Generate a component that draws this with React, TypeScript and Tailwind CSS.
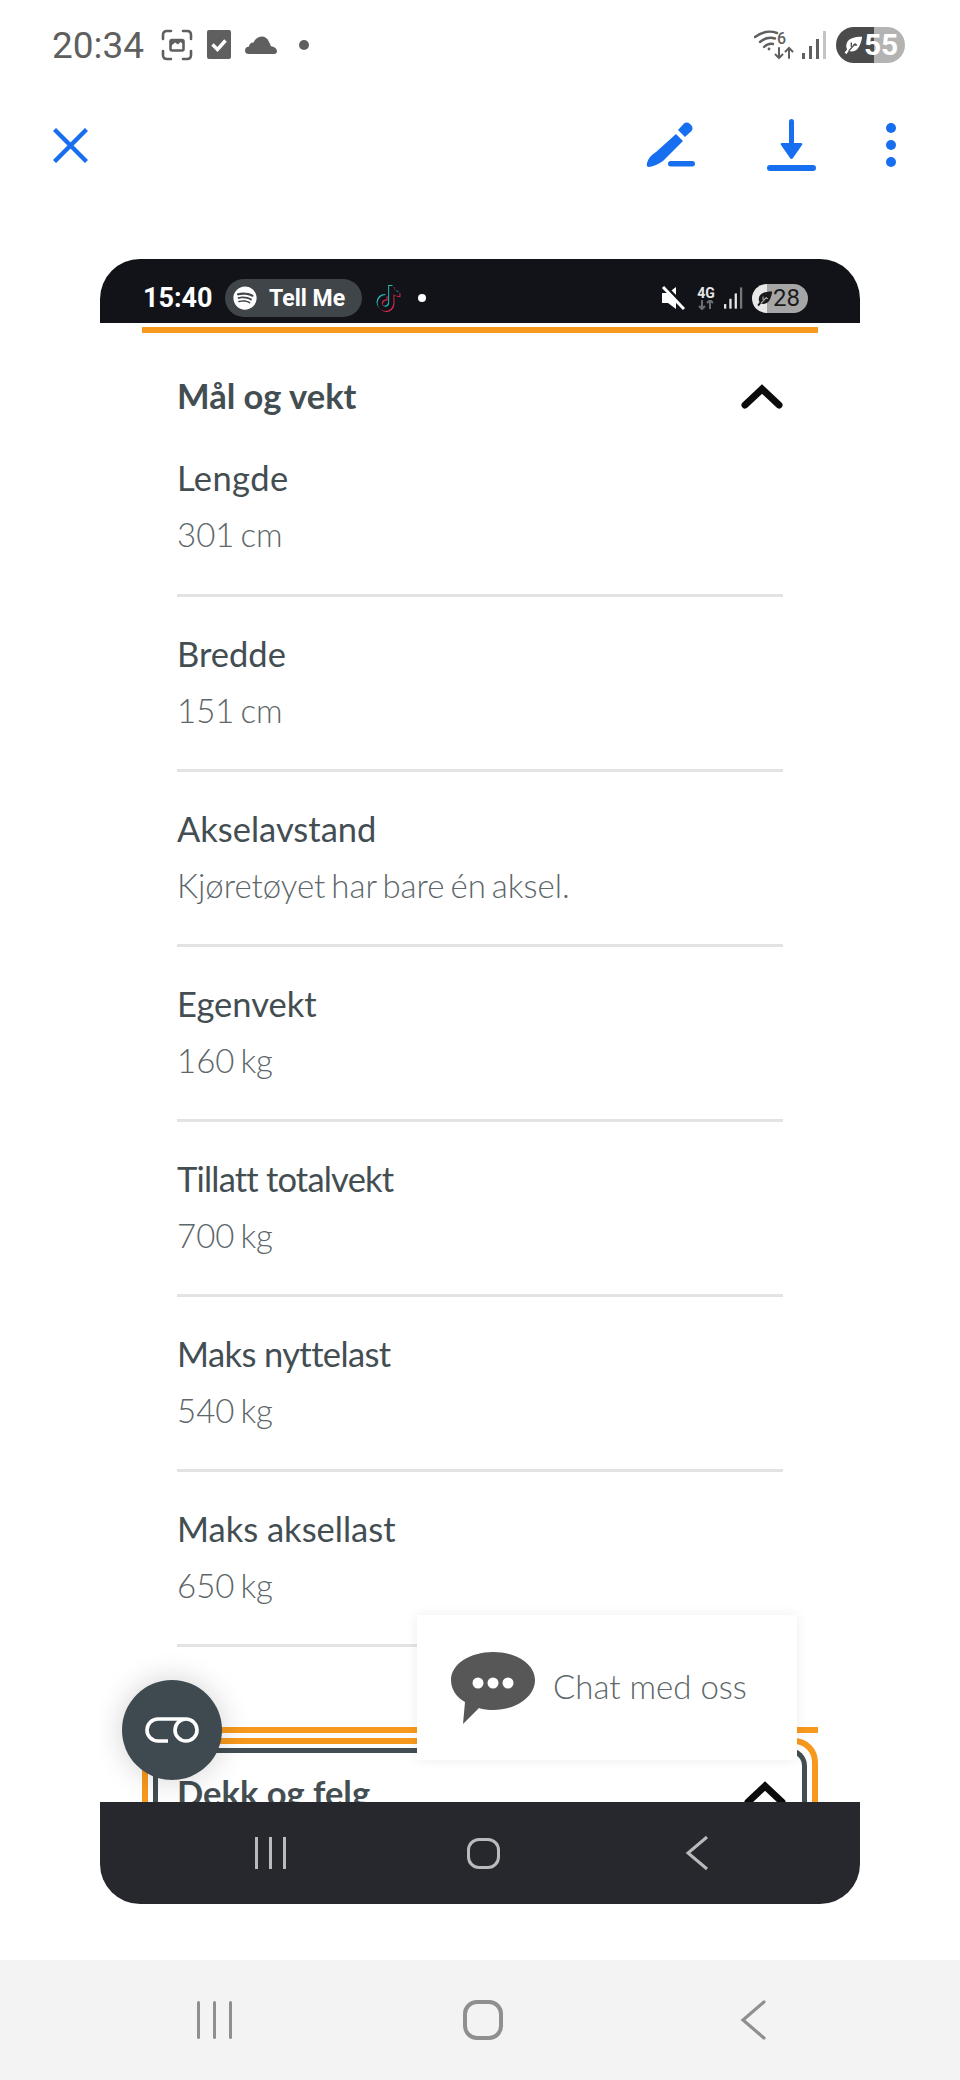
import React from "react";
import { FaSpotify, FaTiktok } from "react-icons/fa";

const rows = [
  { label: "Lengde", value: "301 cm", fit: "tracking-[0.4px]" },
  { label: "Bredde", value: "151 cm", fit: "" },
  { label: "Akselavstand", value: "Kjøretøyet har bare én aksel.", fit: "" },
  { label: "Egenvekt", value: "160 kg", fit: "" },
  { label: "Tillatt totalvekt", value: "700 kg", fit: "tracking-[-0.8px]" },
  { label: "Maks nyttelast", value: "540 kg", fit: "tracking-[-0.6px]" },
  { label: "Maks aksellast", value: "650 kg", fit: "" },
];

function Chevron() {
  return (
    <svg width="42" height="26" viewBox="0 0 42 26" fill="none" stroke="#0b0b0b" strokeWidth="7" strokeLinecap="round" strokeLinejoin="miter">
      <path d="M4 22 L21 6 L38 22" />
    </svg>
  );
}

function Signal({ color, dim, w = 25, h = 28 }: { color: string; dim: string; w?: number; h?: number }) {
  return (
    <svg width={w} height={h} viewBox="0 0 25 28">
      <rect x="0" y="22" width="3" height="6" fill={color} />
      <rect x="7" y="15" width="3" height="13" fill={color} />
      <rect x="14" y="8" width="3" height="20" fill={color} />
      <rect x="21" y="0" width="3" height="28" fill={dim} />
    </svg>
  );
}

function Leaf({ color, stem, size }: { color: string; stem: string; size: number }) {
  return (
    <svg width={size} height={size} viewBox="0 0 24 24" fill={color}>
      <path d="M23 2 C13 2 5 4 4 12 C3.7 14 4 15.5 5 17 L2 21 L4 23 L7 19 C9 20 12 20 15 18.5 C19 16.5 22 9 23 2 Z" />
      <path d="M7 19 L15 10 M10 14 L10 9 M12 12 L17 12" stroke={stem} strokeWidth="1.6" fill="none" />
    </svg>
  );
}

export default function App() {
  return (
    <div className="w-[960px] h-[2080px] bg-white flex flex-col overflow-hidden font-['Lato','Noto_Sans',sans-serif]">
      {/* phone status bar */}
      <div className="h-[90px] pl-[52px] pr-[55px] flex items-center justify-between text-[#5f5f5f]">
        <div className="flex items-center">
          <span className="text-[37px] leading-none font-normal font-['Roboto',sans-serif] w-[109px]">20:34</span>
          <svg width="32" height="32" viewBox="0 0 32 32" fill="none" stroke="#5f5f5f" strokeWidth="2.6" strokeLinecap="round">
            <path d="M2 10 V6 Q2 2 6 2 H10 M22 2 H26 Q30 2 30 6 V10 M30 22 V26 Q30 30 26 30 H22 M10 30 H6 Q2 30 2 26 V22" />
            <rect x="9.5" y="11" width="13" height="10.5" rx="1.5" />
            <path d="M10 17 L14 13.5 L17 15.5 L19.5 13 L22 15 V11 H10 Z" fill="#5f5f5f" stroke="none" />
          </svg>
          <svg className="ml-[14px]" width="24" height="30" viewBox="0 0 24 30">
            <rect width="24" height="29" rx="2" fill="#5f5f5f" />
            <path d="M5.5 14.5 L10.5 19.5 L18.5 10.5" fill="none" stroke="#fff" strokeWidth="3.4" />
          </svg>
          <svg className="ml-[14px]" width="32" height="18" viewBox="0 0 32 18" fill="#5f5f5f">
            <path d="M4 18 Q0 18 0 14.5 Q0 11 4 10.5 Q4.5 6.5 8.5 6.5 Q11 1 16.5 0.5 Q22 0.5 24 6 Q26 9 25.5 10 Q31.5 11 32 15 Q32 18 29 18 Z" />
          </svg>
          <span className="ml-[22px] w-[10px] h-[10px] rounded-full bg-[#5f5f5f]" />
        </div>
        <div className="flex items-center">
          <svg width="40" height="30" viewBox="0 0 40 30" fill="none" stroke="#5f5f5f" strokeWidth="2.4" strokeLinecap="round">
            <path d="M1 7 Q12 -1 23 3" />
            <path d="M6 12 Q13 6 21 8.5" />
            <path d="M10 17 Q14 13 19 14" />
            <circle cx="15" cy="19" r="1.4" fill="#5f5f5f" stroke="none" />
            <path d="M25 18 V28 M21.5 24.5 L25 28 L28.5 24.5" strokeWidth="2" />
            <path d="M35 28 V18 M31.5 21.5 L35 18 L38.5 21.5" strokeWidth="2" />
            <text x="23" y="14" fontSize="16" fontWeight="500" fill="#5f5f5f" stroke="none" fontFamily="Roboto">6</text>
          </svg>
          <span className="ml-[8px] flex"><Signal color="#5f5f5f" dim="#c4c4c4" /></span>
          <div className="ml-[9px] w-[69px] h-[36px] rounded-full overflow-hidden flex relative">
            <div className="w-[38px] bg-[#4b4b4b]" />
            <div className="flex-1 bg-[#b3b3b3]" />
            <div className="absolute inset-0 flex items-center pl-[7px]">
              <Leaf color="#fff" stem="#4b4b4b" size={20} />
              <span className="ml-[1px] text-white text-[30px] leading-none font-bold font-['Roboto',sans-serif] tracking-[-0.3px]">55</span>
            </div>
          </div>
        </div>
      </div>

      {/* toolbar */}
      <div className="mt-[17px] h-[76px] pl-[53px] pr-[64px] flex items-center justify-between">
        <svg width="35" height="35" viewBox="0 0 35 35" stroke="#176ff0" strokeWidth="4.4" fill="none">
          <path d="M1.5 1.5 L33.5 33.5 M33.5 1.5 L1.5 33.5" />
        </svg>
        <div className="flex items-center">
          <svg width="50" height="46" viewBox="0 0 50 46" fill="#176ff0">
            <path d="M30 12 L37 19 L17 39 Q10 44 3 45 Q0 45 1 41 Q3 34 10 30 Z" />
            <path d="M32 8 L38 1.5 Q41 -0.5 44 2 L45.5 3.5 Q47.5 6.5 45.5 9 L39 15 Z" />
            <rect x="22" y="39" width="27" height="5.5" rx="2.7" />
          </svg>
          <svg className="ml-[71px]" width="49" height="52" viewBox="0 0 49 52" fill="#176ff0">
            <rect x="22" y="0" width="5" height="26" rx="2.5" />
            <path d="M15 24 H34 Q36 24 35 26 L26 39 Q24.5 41 23 39 L14 26 Q13 24 15 24 Z" />
            <rect x="0" y="46" width="49" height="6" rx="3" />
          </svg>
          <div className="ml-[70px] flex flex-col gap-[7px]">
            <span className="block w-[10px] h-[10px] rounded-full bg-[#176ff0]" />
            <span className="block w-[10px] h-[10px] rounded-full bg-[#176ff0]" />
            <span className="block w-[10px] h-[10px] rounded-full bg-[#176ff0]" />
          </div>
        </div>
      </div>

      {/* nested screenshot */}
      <div className="mt-[76px] mx-[100px] w-[760px] h-[1645px] rounded-[40px] overflow-hidden flex flex-col">
        <div className="h-[64px] shrink-0 bg-[#111318] pl-[43px] pr-[52px] pt-[20px] flex items-start justify-between text-white">
          <div className="flex items-center h-[38px]">
            <span className="text-[27px] leading-none font-bold font-['Roboto',sans-serif] w-[82px]">15:40</span>
            <div className="w-[137px] h-[38px] rounded-full bg-[#3f4549] flex items-center pl-[8px]">
              <FaSpotify className="text-[24px] text-white" />
              <span className="ml-[12px] text-[23px] leading-none font-bold font-['Roboto',sans-serif]">Tell Me</span>
            </div>
            <div className="ml-[13px] relative w-[25px] h-[27px]">
              <FaTiktok className="absolute left-0 top-0 text-[25px] text-[#2bb7b3]" />
              <FaTiktok className="absolute left-[2px] top-[2px] text-[25px] text-[#d92a4e]" />
              <FaTiktok className="absolute left-[1px] top-[1px] text-[25px] text-[#111318]" />
            </div>
            <span className="ml-[18px] w-[8px] h-[8px] rounded-full bg-white" />
          </div>
          <div className="flex items-center h-[38px]">
            <svg width="24" height="24" viewBox="0 0 24 24" fill="#fff">
              <path d="M1 7 H7 L15 1 V23 L7 17 H1 Z" />
              <path d="M3 0 L24 22" stroke="#111318" strokeWidth="5" />
              <path d="M2 1 L23 23" stroke="#fff" strokeWidth="3" />
            </svg>
            <div className="ml-[11px] w-[20px] flex flex-col items-center">
              <span className="text-[14px] leading-[14px] font-bold font-['Roboto',sans-serif] text-[#e6e6e6]">4G</span>
              <svg width="18" height="10" viewBox="0 0 18 10" fill="none" stroke="#6b6e72" strokeWidth="2">
                <path d="M5 0 V9 M2 6 L5 9 L8 6 M13 9 V0 M10 3 L13 0 L16 3" />
              </svg>
            </div>
            <span className="ml-[8px] flex"><Signal color="#e6e6e6" dim="#777" w={19} h={22} /></span>
            <div className="ml-[9px] w-[56px] h-[29px] rounded-full overflow-hidden flex relative">
              <div className="w-[15px] bg-[#e8e8e8]" />
              <div className="flex-1 bg-[#a6a6a6]" />
              <div className="absolute inset-0 flex items-center pl-[4px]">
                <Leaf color="#1a1a1a" stem="#a6a6a6" size={17} />
                <span className="text-[#1a1a1a] text-[24px] leading-none font-['Roboto',sans-serif]">28</span>
              </div>
            </div>
          </div>
        </div>

        <div className="relative flex-1 min-h-0 overflow-hidden bg-white">
          <div className="mx-[42px] mt-[4px] h-[6px] bg-[#f7991c]" />
          <div className="px-[77px] pt-[43px] text-[#434e52]">
            <div className="flex items-center justify-between h-[40px]">
              <span className="text-[34.5px] leading-[40px] font-bold">Mål og vekt</span>
              <Chevron />
            </div>
            <div>
              {rows.map((row, i) => (
                <div key={row.label} className={i === 0 ? "border-b-[3px] border-[#e2e3e3] h-[181px] pt-[42px]" : "border-b-[3px] border-[#e2e3e3] h-[175px] pt-[37px]"}>
                  <div className={`text-[34.5px] leading-[40px] text-[#434e52] ${row.fit}`}>{row.label}</div>
                  <div className="mt-[16px] text-[33px] leading-[40px] font-light text-[#5d6669] [word-spacing:-3px]">{row.value}</div>
                </div>
              ))}
            </div>
          </div>

          <div className="mx-[42px] mt-[80px] border-t-[6px] border-[#f7991c]">
            <div className="mt-[5px] border-x-[6px] border-t-[6px] border-[#f7991c] rounded-t-[24px] pt-[4px] px-[5px]">
              <div className="border-x-[5px] border-t-[5px] border-[#434e52] rounded-t-[18px] pl-[19px] pr-[16px] pt-[20px] flex items-center justify-between">
                <span className="text-[34.5px] leading-[40px] font-bold text-[#434e52]">Dekk og felg</span>
                <Chevron />
              </div>
            </div>
          </div>

          {/* floating buttons */}
          <div className="absolute left-[22px] top-[1357px] w-[100px] h-[100px] rounded-full bg-[#3f4a50] shadow-[0_0_30px_rgba(0,0,0,0.18)] flex items-center justify-center">
            <svg width="54" height="26" viewBox="0 0 54 26" fill="none" stroke="#fff" strokeWidth="3.6">
              <path d="M23 24 H13 A11 11 0 0 1 13 2 H41 A11 11 0 1 1 30 13 A11 11 0 0 1 41 2" />
            </svg>
          </div>
          <div className="absolute left-[317px] top-[1292px] w-[380px] h-[145px] bg-white shadow-[0_0_12px_rgba(0,0,0,0.07)] flex items-center pl-[34px]">
            <svg width="84" height="72" viewBox="0 0 84 72">
              <path d="M42 0 C65 0 84 12 84 28 C84 45 65 58 42 58 C37 58 32 57.5 28 56 L12 72 L14 50 C5 45 0 37 0 28 C0 12 19 0 42 0 Z" fill="#575757" />
              <circle cx="27" cy="31" r="5.5" fill="#fff" />
              <circle cx="42" cy="31" r="5.5" fill="#fff" />
              <circle cx="57" cy="31" r="5.5" fill="#fff" />
            </svg>
            <span className="ml-[18px] pb-[2px] text-[33px] leading-none font-light text-[#5d6669]">Chat med oss</span>
          </div>
        </div>

        <div className="h-[102px] shrink-0 bg-[#27282d] flex items-center relative">
          <div className="pl-[155px] flex gap-[11px]">
            <span className="w-[3px] h-[32px] bg-[#b9babb]" />
            <span className="w-[3px] h-[32px] bg-[#b9babb]" />
            <span className="w-[3px] h-[32px] bg-[#b9babb]" />
          </div>
          <span className="ml-[181px] w-[33px] h-[31px] rounded-[12px] border-[3px] border-[#b9babb]" />
          <svg className="ml-[185px]" width="24" height="36" viewBox="0 0 24 36" fill="none" stroke="#b9babb" strokeWidth="3">
            <path d="M22 2 L3 18 L22 34" />
          </svg>
        </div>
      </div>

      {/* phone navigation bar */}
      <div className="mt-[56px] h-[120px] shrink-0 bg-[#f3f3f3] flex items-center">
        <div className="ml-[197px] flex gap-[13px]">
          <span className="w-[3px] h-[38px] bg-[#8f8f8f] rounded-full" />
          <span className="w-[3px] h-[38px] bg-[#8f8f8f] rounded-full" />
          <span className="w-[3px] h-[38px] bg-[#8f8f8f] rounded-full" />
        </div>
        <span className="ml-[231px] w-[40px] h-[40px] rounded-[14px] border-[4px] border-[#8f8f8f]" />
        <svg className="ml-[237px]" width="26" height="40" viewBox="0 0 26 40" fill="none" stroke="#8f8f8f" strokeWidth="3.2" strokeLinecap="round">
          <path d="M24 2 L3 20 L24 38" />
        </svg>
      </div>
    </div>
  );
}
